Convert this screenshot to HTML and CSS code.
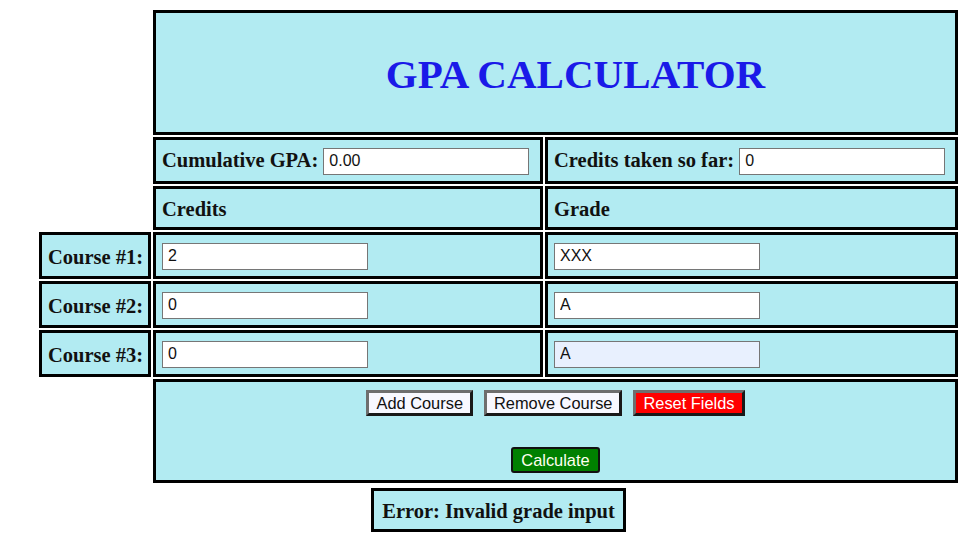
FILE: index.html
```html
<!DOCTYPE html>
<html>
<head>
<meta charset="utf-8">
<link rel="stylesheet" href="styles.css">
</head>
<body>
<div class="wrap">
  <table class="calc">
    <colgroup><col class="c1"><col class="c2"><col class="c3"></colgroup>
    <tr class="r-title">
      <td class="empty"></td>
      <td class="cell title" colspan="2"><h1>GPA CALCULATOR</h1></td>
    </tr>
    <tr class="r-in">
      <td class="empty"></td>
      <td class="cell">Cumulative GPA: <input class="field" type="text" value="0.00"></td>
      <td class="cell">Credits taken so far: <input class="field" type="text" value="0"></td>
    </tr>
    <tr class="r-head">
      <td class="empty"></td>
      <td class="cell">Credits</td>
      <td class="cell">Grade</td>
    </tr>
    <tr class="r-course">
      <td class="cell label">Course #1:</td>
      <td class="cell"><input class="field course" type="text" value="2"></td>
      <td class="cell"><input class="field course" type="text" value="XXX"></td>
    </tr>
    <tr class="r-course">
      <td class="cell label">Course #2:</td>
      <td class="cell"><input class="field course" type="text" value="0"></td>
      <td class="cell"><input class="field course" type="text" value="A"></td>
    </tr>
    <tr class="r-course">
      <td class="cell label">Course #3:</td>
      <td class="cell"><input class="field course" type="text" value="0"></td>
      <td class="cell"><input class="field course autofill" type="text" value="A"></td>
    </tr>
    <tr class="r-btn">
      <td class="empty"></td>
      <td class="cell buttons" colspan="2">
        <div class="btn-row">
          <button class="btn plain">Add Course</button>
          <button class="btn plain">Remove Course</button>
          <button class="btn reset">Reset Fields</button>
        </div>
        <div class="btn-row calc-row">
          <button class="btn go">Calculate</button>
        </div>
      </td>
    </tr>
  </table>
  <div class="error-wrap">
    <div class="error">Error: Invalid grade input</div>
  </div>
</div>
</body>
</html>
```
FILE: styles.css
```css
body {
  margin: 8px;
  background: #ffffff;
  font-family: "Liberation Serif", "Times New Roman", serif;
}

.wrap {
  width: 923px;
  margin-left: 29px;
}

.calc {
  width: 923px;
  table-layout: fixed;
  border-collapse: separate;
  border-spacing: 2px;
}

.c1 { width: 112px; }
.c2 { width: 390px; }
.c3 { width: 413px; }

.calc td {
  box-sizing: border-box;
  padding: 3px 6px 0;
}

.cell {
  background: #b2ebf2;
  border: 3px solid #000;
  font-weight: bold;
  font-size: 20.5px;
  color: #111;
  vertical-align: middle;
}

.empty {
  background: transparent;
  border: none;
}

.r-title { height: 125px; }
.r-in { height: 47px; }
.r-head { height: 44px; }
.r-course { height: 47px; }
.r-btn { height: 104px; }

.title h1 {
  margin: 0;
  padding-left: 40px;
  text-align: center;
  font-size: 41px;
  font-weight: bold;
  color: #1a1ae8;
}

.label {
  white-space: nowrap;
}

.field {
  box-sizing: border-box;
  width: 206px;
  height: 27px;
  border: 1px solid #767676;
  background: #fff;
  padding: 1px 5px;
  margin-top: -3px;
  font-family: "Liberation Sans", Arial, sans-serif;
  font-size: 16px;
  color: #111;
  vertical-align: middle;
}

.autofill {
  background: #e8f0fe;
}

.calc td.buttons {
  vertical-align: top;
  padding-top: 8px;
}

.btn-row {
  display: flex;
  justify-content: center;
  gap: 11px;
}

.calc-row {
  margin-top: 31px;
}

.btn {
  box-sizing: border-box;
  height: 26px;
  padding: 1px 7px;
  font-family: "Liberation Sans", Arial, sans-serif;
  font-size: 16.4px;
  line-height: 18px;
  border: 3px outset #6e6e6e;
  border-radius: 0;
}

.plain {
  background: #f8f8ff;
  color: #111;
}

.reset {
  background: #ff0000;
  color: #fff;
}

.go {
  background: #008000;
  color: #fffff0;
  border: 2px solid #111;
  border-radius: 3px;
  padding: 1px 8px;
}

.error-wrap {
  display: flex;
  justify-content: center;
  margin-top: 3px;
}

.error {
  box-sizing: border-box;
  height: 44px;
  padding: 3px 8px 0;
  display: flex;
  align-items: center;
  background: #b2ebf2;
  border: 3px solid #000;
  font-weight: bold;
  font-size: 20.5px;
  color: #111;
}
```
